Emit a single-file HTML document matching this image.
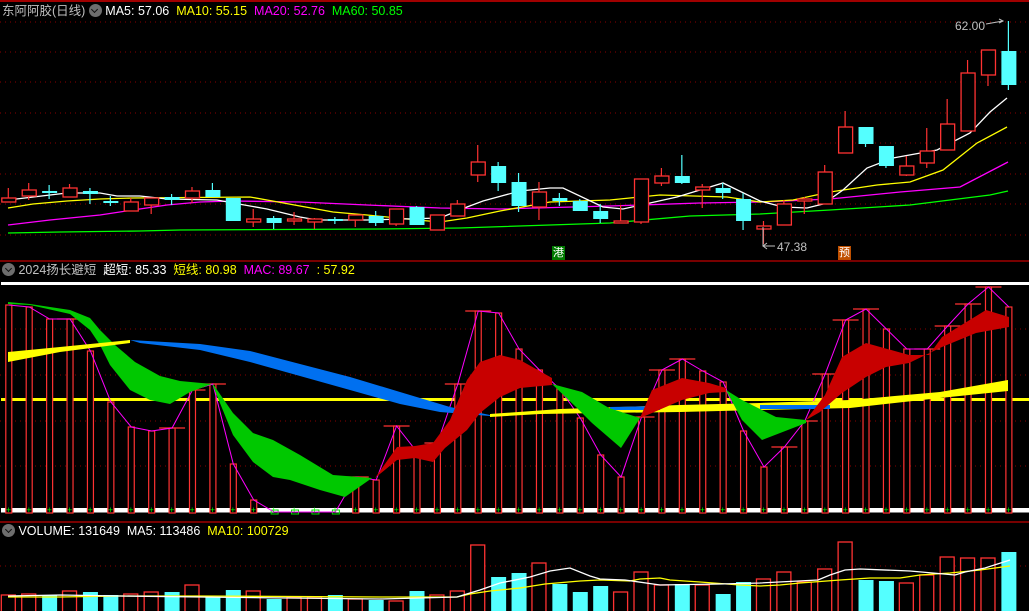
<!DOCTYPE html>
<html><head><meta charset="utf-8"><style>
html,body{margin:0;padding:0;background:#000;width:1029px;height:611px;overflow:hidden}
.t{position:absolute;font-family:"Liberation Sans","Noto Sans CJK SC",sans-serif;font-size:12.5px;white-space:pre;line-height:15px}
.ic{display:inline-block;width:13px;height:13px;border-radius:50%;background:#6e6e6e;vertical-align:-2px;position:relative}
.ic:after{content:"";position:absolute;left:3.5px;top:2.5px;width:4px;height:4px;border-right:1.6px solid #111;border-bottom:1.6px solid #111;transform:rotate(45deg)}
</style></head><body>
<svg id="s" width="1029" height="611" style="position:absolute;left:0;top:0" xmlns="http://www.w3.org/2000/svg">
<rect x="0" y="0" width="1029" height="2" fill="#a00000"/>
<line x1="0" y1="261" x2="1029" y2="261" stroke="#a00000" stroke-width="1.5"/>
<line x1="0" y1="522" x2="1029" y2="522" stroke="#a00000" stroke-width="1.5"/>
<g id="grid" stroke="#8a0000" stroke-dasharray="1,4"></g>
<!-- panel 2 ribbons -->
<rect x="1" y="282" width="1028" height="3" fill="#fff"/>
<rect x="1" y="398" width="1028" height="3" fill="#ffff00"/>
<rect x="1" y="508" width="1028" height="4.5" fill="#fff"/>
<g id="bars"></g>
<polygon fill="#00c800" points="8,302 30,304 70,310 90,318 100,330 115,345 135,362 160,376 180,381 212,384 190,392 170,404 150,400 130,390 110,365 100,345 90,330 70,314 30,305 8,304"/>
<polygon fill="#ffff00" points="8,352 60,347 130,340 130,343 60,352 8,362"/>
<polygon fill="#0070f0" points="130,340 200,344 250,351 300,364 350,377 400,392 450,407 490,415 490,416 440,412 400,404 350,390 300,376 250,362 200,350 140,343"/>
<polygon fill="#ffff00" points="490,414 560,409 620,407 680,405 760,403 850,400 940,392 1008,380 1008,391 940,398 850,408 760,410 680,412 600,413 540,414 490,417"/>
<polygon fill="#0070f0" points="610,407 660,406 660,410 610,410"/>
<polygon fill="#0070f0" points="760,405 830,405 830,409 760,409"/>
<polygon fill="#00c800" points="213,384 233,413 253,433 273,440 300,455 333,475 372,478 345,497 320,490 290,480 273,477 253,462 233,435 213,386"/>
<polygon fill="#c80000" points="375,478 397,447 415,446 433,443 450,420 467,380 480,362 500,355 520,360 552,378 552,385 520,388 500,397 480,413 467,430 445,448 433,462 415,458 397,460"/>
<polygon fill="#00c800" points="552,384 582,392 609,408 640,418 621,448 592,423 576,407"/>
<polygon fill="#c80000" points="640,418 652,390 682,378 709,383 726,388 726,392 709,393 682,400 652,413"/>
<polygon fill="#00c800" points="726,390 742,400 776,417 806,420 806,423 762,440 742,420"/>
<polygon fill="#c80000" points="806,420 825,395 842,357 866,343 909,355 929,355 942,337 986,310 1009,317 1009,327 976,333 942,347 909,363 886,367 866,377 842,393 820,412"/>
<g id="top"></g>
</svg>
<div class="t" style="left:2px;top:4px;color:#c0c0c0">东阿阿胶(日线) <span class="ic"></span> <span style="color:#fff">MA5: 57.06</span>  <span style="color:#ffff00">MA10: 55.15</span>  <span style="color:#ff00ff">MA20: 52.76</span>  <span style="color:#00ff00">MA60: 50.85</span></div>
<div class="t" style="left:2px;top:263px;color:#c0c0c0"><span class="ic"></span> 2024扬长避短  <span style="color:#fff">超短: 85.33</span>  <span style="color:#ffff00">短线: 80.98</span>  <span style="color:#ff00ff">MAC: 89.67</span> <span style="color:#ffff00"> : 57.92</span></div>
<div class="t" style="left:2px;top:524px;color:#fff"><span class="ic"></span> VOLUME: 131649  MA5: 113486  <span style="color:#ffff00">MA10: 100729</span></div>
<div class="t" style="left:955px;top:19px;color:#c0c0c0;font-size:12px">62.00</div>
<div class="t" style="left:777px;top:240px;color:#c0c0c0;font-size:12px">47.38</div>
<div class="t" style="left:552px;top:246px;width:13px;height:14px;background:#007a00;color:#fff;font-size:11px;line-height:14px;text-align:center">港</div>
<div class="t" style="left:838px;top:246px;width:13px;height:14px;background:#c05000;color:#fff;font-size:11px;line-height:14px;text-align:center">预</div>
<script>
var NS="http://www.w3.org/2000/svg";
function el(p,t,a){var e=document.createElementNS(NS,t);for(var k in a)e.setAttribute(k,a[k]);document.getElementById(p).appendChild(e);return e;}
var X=function(i){return 8.3+20.41*i;};
// grid
[22,52,82,113,143,174,204,235,329,375,421,466,566].forEach(function(y){el("grid","line",{x1:0,y1:y,x2:1029,y2:y});});
// candles: [up, boxTop, boxBot, wickTop, wickBot]
var C=[[1,198,202,188,202],[1,190,196,183,200],[0,191,193,185,199],[1,188,197,184,197],[0,191,194,188,204],[0,201,203,196,206],[1,202,211,198,211],[1,198,205,198,214],[0,197,200,194,205],[1,191,198,187,203],
[0,190,197,183,197],[0,198,221,198,221],[1,219,222,209,227],[0,218,223,216,229],[1,219,221,212,225],[1,219,222,218,229],[0,219,220,217,224],[1,215,220,215,227],[0,216,223,211,226],[1,209,224,209,226],
[0,207,225,206,225],[1,215,230,215,230],[1,204,216,200,216],[1,162,175,145,182],[0,166,183,162,191],[0,182,206,173,212],[1,192,207,182,220],[0,198,201,193,206],[0,201,211,199,211],[0,211,219,204,223],
[1,221,223,205,223],[1,179,222,179,224],[1,176,183,168,186],[0,176,183,155,184],[1,187,190,184,208],[0,188,193,183,199],[0,199,221,193,230],[1,226,229,221,244],[1,204,225,200,225],[1,199,201,197,214],
[1,172,204,165,204],[1,127,153,111,153],[0,127,144,127,147],[0,146,166,146,168],[1,166,175,156,176],[1,151,163,128,168],[1,124,150,99,150],[1,73,131,60,131],[1,50,75,50,86],[0,51,85,21,90]];
var R="#ff3232",CY="#54ffff";
// MA lines main
function pl(pts,col){el("top","polyline",{points:pts,fill:"none",stroke:col,"stroke-width":1.3});}
pl("8,233 60,232 140,231 180,230 380,229 460,228 550,225 610,223 690,216 760,214 830,210 910,205 990,195 1008,191","#00ff00");
pl("8,225 50,220 100,215 133,210 167,205 200,202 233,201 300,202 367,205 440,208 500,209 610,206 700,203 760,202 830,199 900,192 960,187 1008,162","#ff00ff");
pl("8,208 33,204 67,201 100,199 133,198 250,197 267,200 300,206 333,212 367,215 417,220 440,222 467,218 500,211 550,202 610,200 660,195 727,197 760,202 793,200 830,192 877,185 910,182 943,170 977,143 1007,127","#ffff00");
pl("8,200 50,195 67,193 100,193 117,196 140,196 167,199 217,200 233,203 267,209 300,217 317,220 367,220 440,218 467,207 483,201 520,191 550,188 563,188 603,207 623,209 650,203 677,197 723,183 760,201 783,207 807,208 823,204 843,190 867,168 893,158 937,150 970,133 990,112 1007,98","#fff");
C.forEach(function(c,i){var x=X(i);var col=c[0]?R:CY;
 el("top","line",{x1:x,y1:c[3],x2:x,y2:c[4],stroke:col,"stroke-width":1.2});
 if(c[0])el("top","rect",{x:x-6.5,y:c[1],width:14,height:Math.max(c[2]-c[1],2),fill:"#000",stroke:col,"stroke-width":1.3});
 else el("top","rect",{x:x-7,y:c[1],width:15,height:Math.max(c[2]-c[1],2),fill:col});
});
// price arrows
el("top","polyline",{points:"986,24 1003,21",stroke:"#c0c0c0",fill:"none"});
el("top","polyline",{points:"999,19 1003,21 999,23",stroke:"#c0c0c0",fill:"none"});
el("top","polyline",{points:"763,227 763,246 775,246",stroke:"#c0c0c0",fill:"none"});
el("top","polyline",{points:"767,243 763,246 767,249",stroke:"#c0c0c0",fill:"none"});
// panel2 bars
var B=[305,307,319,319,351,402,427,431,428,390,384,464,500,512,512,512,512,477,480,426,452,443,384,311,313,349,370,389,418,455,477,417,370,359,371,382,431,467,447,421,374,320,309,329,349,349,326,304,287,307];
var CAP={3:1,8:1,9:1,10:1,17:1,19:1,21:1,22:1,23:1,31:1,32:1,33:1,38:1,39:1,40:1,41:1,42:1,45:1,46:1,47:1,48:1};
var mp=[];
B.forEach(function(y,i){var x=X(i)+0.5;mp.push(x+","+y);
 if(y<508){el("bars","rect",{x:x-3,y:y,width:6,height:513-y,fill:"#000",stroke:R,"stroke-width":1.2});}
 else{el("bars","rect",{x:x-3,y:510,width:7,height:4,fill:"none",stroke:"#00e000","stroke-width":1});}
 if(CAP[i])el("bars","line",{x1:x-13,y1:y,x2:x+13,y2:y,stroke:R,"stroke-width":1.2});
 el("top","text",{x:x-3,y:513,fill:"#00ff00","font-size":"9","font-family":"Liberation Sans"}).textContent="+";
});
el("bars","polyline",{points:mp.join(" "),fill:"none",stroke:"#ff00ff","stroke-width":1});
// volume
var V=[595,594,595,591,592,595,594,592,592,585,597,590,591,599,597,597,595,599,600,601,591,595,591,545,577,573,563,584,592,586,592,572,585,584,585,594,582,579,572,582,569,542,580,581,583,575,557,558,558,552];
V.forEach(function(y,i){var x=X(i);
 if(C[i][0])el("top","rect",{x:x-7,y:y,width:14,height:620-y,fill:"#000",stroke:R,"stroke-width":1.3});
 else el("top","rect",{x:x-7,y:y,width:15,height:620-y,fill:CY});});
pl("8,597 60,597 120,596 200,596 380,597 457,597 470,594 490,591 520,588 545,584 580,581 600,580 630,581 640,579 660,578 670,580 700,582 740,585 760,586 780,585 800,583 840,580 870,578 900,578 920,575 950,573 980,570 1010,566","#ffff00");
pl("8,596 60,595 120,596 200,597 380,599 457,597 470,593 480,590 500,583 530,577 550,571 570,568 590,576 600,579 625,580 660,585 720,584 760,583 818,580 830,575 845,570 860,569 910,571 955,575 965,572 985,568 1010,560","#fff");
</script>
</body></html>
